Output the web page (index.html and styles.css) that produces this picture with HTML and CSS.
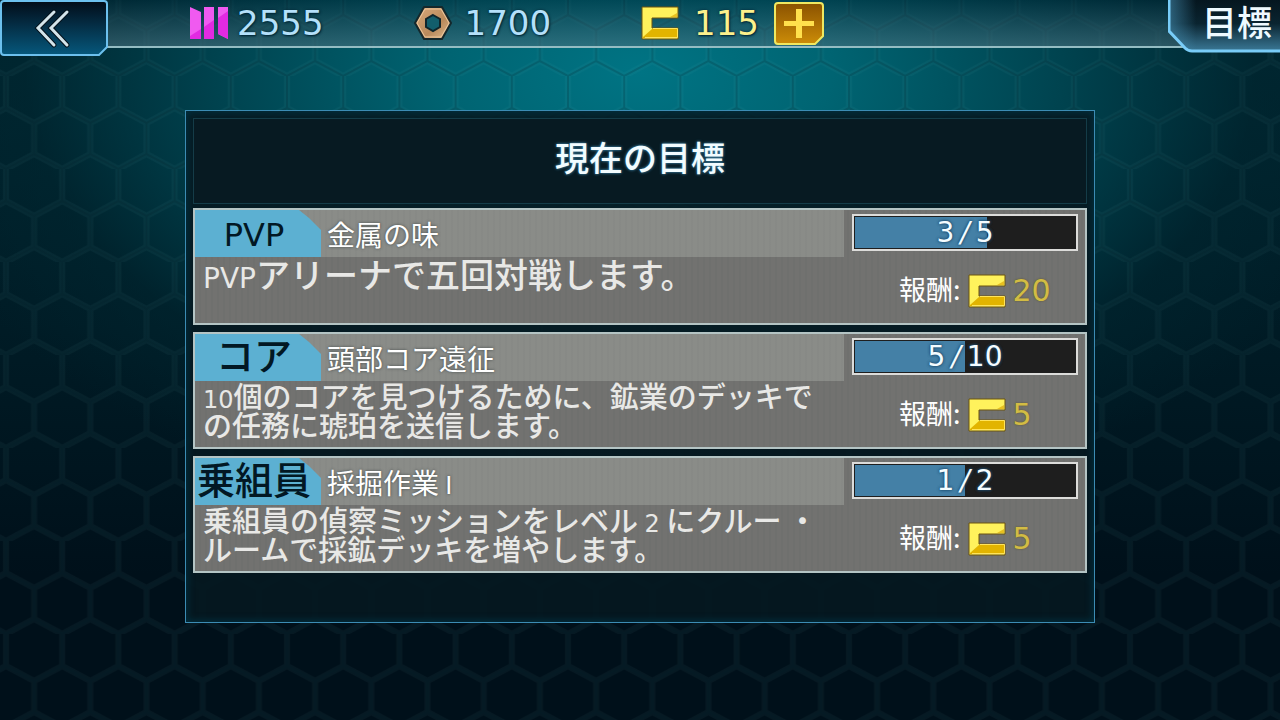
FILE: index.html
```html
<!DOCTYPE html>
<html lang="ja">
<head>
    <meta charset="UTF-8">
    <meta name="viewport" content="width=device-width, initial-scale=1.0">
    <title>目標</title>
    <link rel="stylesheet" href="styles.css">
</head>
<body>
    <svg class="hexes" aria-hidden="true">
        <defs>
            <pattern id="hex" width="56.2" height="93" patternUnits="userSpaceOnUse" patternTransform="translate(6 -17)">
                <path fill="none" stroke="#7fc4c8" stroke-width="6" stroke-opacity="0.05" d="M0 0V32L28.1 47L56.2 32V0M28.1 47V78L0 93L0 96M28.1 78L56.2 93V96"/>
                <path fill="none" stroke="#001c26" stroke-width="2" stroke-opacity="0.2" d="M0 0V32L28.1 47L56.2 32V0M28.1 47V78L0 93M28.1 78L56.2 93"/>
            </pattern>
            <linearGradient id="backFill" x1="0" y1="0" x2="0" y2="1">
                <stop offset="0" stop-color="#020c18"/>
                <stop offset="0.4" stop-color="#042a40"/>
                <stop offset="1" stop-color="#06587c"/>
            </linearGradient>
            <linearGradient id="plusFill" x1="0" y1="0" x2="0" y2="1">
                <stop offset="0" stop-color="#8a5200"/>
                <stop offset="1" stop-color="#cc8c08"/>
            </linearGradient>
            <linearGradient id="nutFill" x1="0" y1="0" x2="1" y2="1">
                <stop offset="0" stop-color="#d8aa7c"/>
                <stop offset="0.6" stop-color="#b98a5c"/>
                <stop offset="1" stop-color="#e0bc90"/>
            </linearGradient>
            <linearGradient id="tabFill" x1="0" y1="0" x2="0" y2="1">
                <stop offset="0" stop-color="#04141c"/>
                <stop offset="0.5" stop-color="#0a2430"/>
                <stop offset="1" stop-color="#3a7896"/>
            </linearGradient>
            <linearGradient id="tabGlow" x1="0" y1="0" x2="1" y2="0">
                <stop offset="0" stop-color="#4690b4" stop-opacity="0.6"/>
                <stop offset="1" stop-color="#4690b4" stop-opacity="0"/>
            </linearGradient>
            <symbol id="gold" viewBox="0 0 38 34">
                <path fill="#fff25c" stroke="#6c5410" stroke-width="1" d="M1 1H37V12H11V22H37V33H1Z"/>
                <path fill="#e2b400" d="M2 32V31L11 23H36V32Z"/>
                <path fill="#e8c020" d="M29 11L36 7V11Z"/>
                <path fill="none" stroke="#ffe45c" stroke-width="1" d="M4 31.5H36.5V22.5H12"/>
            </symbol>
        </defs>
        <rect width="100%" height="100%" fill="url(#hex)"/>
    </svg>

    <header class="topbar">
        <button class="back" type="button" aria-label="戻る">
            <svg width="108" height="56" viewBox="0 0 108 56">
                <path fill="url(#backFill)" stroke="#6cc0ee" stroke-width="2" d="M4 1H104Q107 1 107 4V47L99 55H4Q1 55 1 52V4Q1 1 4 1Z"/>
                <g fill="none" stroke-linejoin="miter" stroke-linecap="round">
                    <path stroke="#04121c" stroke-width="5" d="M54 12L38 28L54 45M67 12L51 28L67 45"/>
                    <path stroke="#d4e4ea" stroke-width="3" d="M54 12L38 28L54 45M67 12L51 28L67 45"/>
                </g>
            </svg>
        </button>
        <div class="resources">
            <div class="resource metal">
                <svg width="38" height="32" viewBox="0 0 38 32">
                    <path fill="#f05af0" d="M0 0L11 5V32H0ZM14 0H24V32H14ZM28 0H38V32L28 27Z"/>
                    <path fill="#e22ae2" d="M0 29L11 22V32H0ZM14 20L24 13V32H14ZM28 11L38 4V32L28 27Z"/>
                </svg>
                <span>2555</span>
            </div>
            <div class="resource nuts">
                <svg width="38" height="34" viewBox="0 0 38 34">
                    <path fill="url(#nutFill)" stroke="#14282c" stroke-width="2" stroke-linejoin="round" d="M10 1H28L37 17L28 33H10L1 17Z"/>
                    <path fill="none" stroke="#ecc69c" stroke-width="1" d="M11 3H27L35 17L27 31H11L3 17Z"/>
                    <path fill="#125e6c" stroke="#10262c" stroke-width="2" d="M19 9L26 13V21L19 25L12 21V13Z"/>
                </svg>
                <span>1700</span>
            </div>
            <div class="resource coins">
                <svg width="38" height="34"><use href="#gold"/></svg>
                <span>115</span>
                <button class="plus" type="button" aria-label="追加">
                    <svg width="50" height="44" viewBox="0 0 50 44">
                        <path fill="url(#plusFill)" stroke="#f0e860" stroke-width="2" d="M4 2H46Q49 2 49 5V35L41 43H4Q1 43 1 40V5Q1 2 4 2Z"/>
                        <path fill="#ffe04c" d="M22 8H28V20H40V25H28V37H22V25H10V20H22Z"/>
                    </svg>
                </button>
            </div>
        </div>
        <div class="tab">
            <svg class="tab-shape" width="112" height="54" viewBox="0 0 112 54" aria-hidden="true">
                <path fill="url(#tabFill)" d="M1 -4V31L20 51H116V-4Z"/>
                <path fill="url(#tabGlow)" d="M1 -4V31L20 51H28V-4Z"/>
                <path fill="none" stroke="#78ccf8" stroke-width="3" d="M1 -4V31L17 48Q20 51 24 51H116"/>
            </svg>
            <h1>目標</h1>
        </div>
    </header>

    <main class="panel">
        <h2>現在の目標</h2>

        <section class="goal">
            <div class="info">
                <div class="head">
                    <span class="tag pvp">PVP</span>
                    <h3>金属の味</h3>
                </div>
                <p class="big"><span class="latin">PVP</span>アリーナで五回対戦します。</p>
            </div>
            <div class="status">
                <div class="bar">
                    <div class="fill" style="width: 60%"></div>
                    <span class="count">3<i>/</i>5</span>
                </div>
                <div class="reward">
                    <span>報酬:</span>
                    <svg width="38" height="34"><use href="#gold"/></svg>
                    <b>20</b>
                </div>
            </div>
        </section>

        <section class="goal">
            <div class="info">
                <div class="head">
                    <span class="tag">コア</span>
                    <h3>頭部コア遠征</h3>
                </div>
                <p><span class="latin">10</span>個のコアを見つけるために、鉱業のデッキで<br>の任務に琥珀を送信します。</p>
            </div>
            <div class="status">
                <div class="bar">
                    <div class="fill" style="width: 50%"></div>
                    <span class="count">5<i>/</i>10</span>
                </div>
                <div class="reward">
                    <span>報酬:</span>
                    <svg width="38" height="34"><use href="#gold"/></svg>
                    <b>5</b>
                </div>
            </div>
        </section>

        <section class="goal">
            <div class="info">
                <div class="head">
                    <span class="tag">乗組員</span>
                    <h3>採掘作業 <span class="latin">I</span></h3>
                </div>
                <p>乗組員の偵察ミッションをレベル <span class="latin">2</span> にクルー ・<br>ルームで採鉱デッキを増やします。</p>
            </div>
            <div class="status">
                <div class="bar">
                    <div class="fill" style="width: 50%"></div>
                    <span class="count">1<i>/</i>2</span>
                </div>
                <div class="reward">
                    <span>報酬:</span>
                    <svg width="38" height="34"><use href="#gold"/></svg>
                    <b>5</b>
                </div>
            </div>
        </section>
    </main>
</body>
</html>
```
FILE: styles.css
```css
* {
    margin: 0px;
    padding: 0px;
    box-sizing: border-box;
}
body {
    min-height: 100vh;
    font-family: "Noto Sans CJK JP", sans-serif;
    color: white;
    background:
        radial-gradient(ellipse 60% 64% at 50% 10%, #007484 0%, #006472 25%, #00434f 55%, rgba(0, 40, 50, 0.5) 80%, rgba(0, 20, 30, 0) 100%),
        linear-gradient(#002630, #001a24 50%, #00101a 80%);
}
svg {
    display: block;
}
.hexes {
    position: absolute;
    top: 0;
    left: 0;
    width: 100%;
    height: 100%;
    z-index: -1;
}

/* top bar */
.topbar {
    height: 48px;
    display: flex;
    align-items: flex-start;
    border-bottom: 2px solid #94bcc2;
    background: linear-gradient(rgba(0, 30, 44, 0.45), rgba(70, 110, 124, 0.6));
}
button {
    border: none;
    background: none;
    cursor: pointer;
}
.resources {
    height: 46px;
    margin-left: 82px;
    display: flex;
    align-items: center;
    gap: 90px;
}
.resource {
    display: flex;
    align-items: center;
    gap: 9px;
    font-family: "DejaVu Sans", sans-serif;
    font-size: 34px;
    line-height: 46px;
    color: #b4e0fa;
    text-shadow: 0 0 3px #002838, 1px 1px 2px #002838;
}
.nuts {
    gap: 13px;
}
.coins {
    gap: 15px;
    color: #fcf08c;
}
.tab {
    position: relative;
    width: 112px;
    height: 54px;
    margin-left: auto;
}
.tab-shape {
    position: absolute;
    top: 0;
    left: 0;
}
.tab h1 {
    position: relative;
    padding-right: 8px;
    text-align: right;
    font-size: 35px;
    font-weight: 500;
    line-height: 42px;
    color: #eefaff;
}

/* goals panel */
.panel {
    width: calc(100% - 370px);
    min-height: 513px;
    margin: 62px auto 0;
    padding: 7px;
    border: 1px solid #3c8cb4;
    background-color: rgba(5, 24, 32, 0.9);
    box-shadow: inset 0 0 6px 2px rgba(0, 50, 66, 0.8);
}
.panel h2 {
    height: 86px;
    margin-bottom: 4px;
    border: 1px solid #143c48;
    background-color: #071a22;
    text-align: center;
    font-size: 34px;
    font-weight: 500;
    line-height: 76px;
    color: #f2fcff;
    text-shadow: 0 0 3px #4aa0cc;
}
.goal {
    height: 117px;
    margin-bottom: 7px;
    display: flex;
    border: 2px solid #b4c4c4;
    background: repeating-linear-gradient(90deg, #727270 0px, #727270 4px, #6c6e6c 5px, #727270 6px);
}
.info {
    flex: 1;
}
.head {
    height: 47px;
    display: flex;
    align-items: center;
    background: repeating-linear-gradient(90deg, #8a8c88 0px, #8a8c88 4px, #858784 5px, #8a8c88 6px);
}
.tag {
    width: 126px;
    height: 47px;
    padding-right: 8px;
    text-align: center;
    font-size: 38px;
    font-weight: 500;
    line-height: 40px;
    white-space: nowrap;
    color: #021824;
    background-color: #5cb0d2;
    clip-path: polygon(0 0, 104px 0, 114px 8px, 126px 20px, 126px 100%, 0 100%);
}
.pvp {
    font-family: "DejaVu Sans", sans-serif;
    font-size: 32px;
    line-height: 50px;
}
.head h3 {
    margin-left: 6px;
    font-size: 28px;
    font-weight: 400;
    line-height: 44px;
    text-shadow: 0 0 3px #404848;
}
.latin {
    font-family: "DejaVu Sans", sans-serif;
    font-size: 24px;
    font-weight: 400;
    line-height: 1px;
}
.info p {
    padding-left: 8px;
    font-size: 29px;
    font-weight: 500;
    line-height: 29px;
    white-space: nowrap;
    color: #e8e8e6;
}
.info .big {
    font-size: 34px;
    line-height: 34px;
}
.big .latin {
    font-size: 28px;
}
.status {
    width: 241px;
    padding: 4px 7px 0 8px;
}
.bar {
    position: relative;
    height: 37px;
    padding: 1px;
    border: 2px solid #dcdcda;
    background-color: #1e1e1e;
}
.fill {
    height: 100%;
    background-color: #4480a6;
}
.count {
    position: absolute;
    top: 0;
    left: 0;
    width: 100%;
    text-align: center;
    font-family: "DejaVu Sans", sans-serif;
    font-size: 28px;
    line-height: 34px;
    color: #f4fcff;
    text-shadow: 0 0 3px #1c4c70, 0 0 3px #1c4c70;
}
.count i {
    margin: 0 6px;
}
.reward {
    height: 36px;
    margin-top: 22px;
    padding-left: 47px;
    display: flex;
    align-items: center;
    gap: 7px;
    font-size: 27px;
    line-height: 32px;
}
.reward span {
    height: 36px;
}
.reward b {
    font-family: "DejaVu Sans", sans-serif;
    font-size: 30px;
    font-weight: 400;
    color: #d2bc44;
    text-shadow: 0 0 2px #5c5428;
}
```
